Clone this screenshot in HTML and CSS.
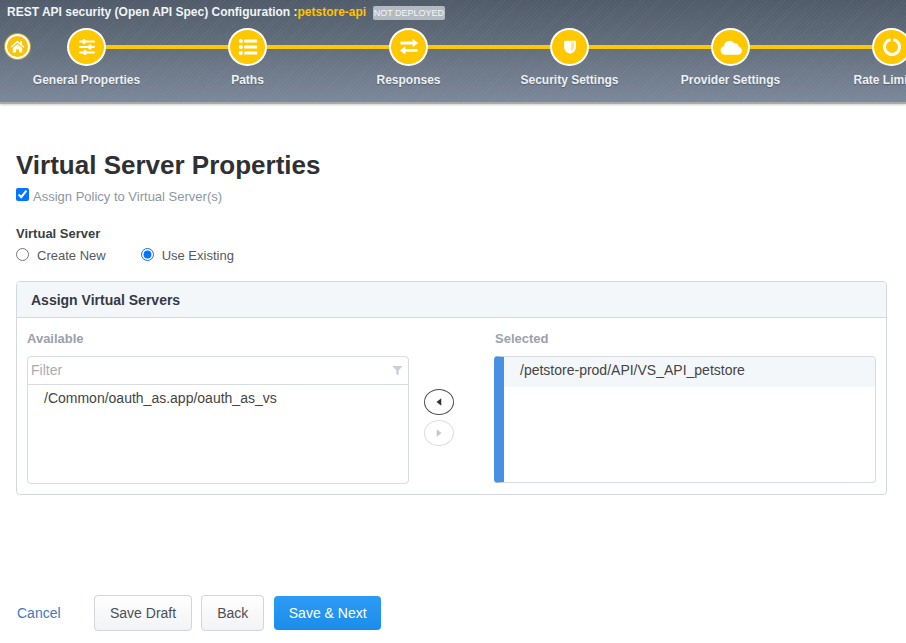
FILE: index.html
```html
<!DOCTYPE html>
<html lang="en">
<head>
<meta charset="utf-8">
<title>Virtual Server Properties</title>
<link rel="stylesheet" href="styles.css">
</head>
<body>
<header class="wizard">
  <div class="wizard-title">
    <span>REST API security (Open API Spec) Configuration :</span><span class="policy-name">petstore-api</span>
    <span class="status-badge">NOT DEPLOYED</span>
  </div>
  <a class="home" href="#" aria-label="Home">
    <svg viewBox="0 0 16 16" width="15" height="15"><path fill="#fff" d="M8 1.6 .6 8.2l1 1.1L8 3.7l6.4 5.6 1-1.1-2.6-2.3V2.4h-2v2L8 1.6Z"/><path fill="#fff" d="M3 9.6 8 5.2l5 4.4V14.4H9.6v-3.2H6.4v3.2H3V9.6Z"/></svg>
  </a>
  <ol class="steps">
    <li class="step">
      <span class="step-dot">
        <svg viewBox="0 0 20 20" width="20" height="20"><g fill="#fff"><rect x="2" y="3.6" width="16" height="1.8" rx=".9"/><rect x="2" y="9.1" width="16" height="1.8" rx=".9"/><rect x="2" y="14.6" width="16" height="1.8" rx=".9"/><rect x="5.5" y="2" width="3" height="5" rx="1"/><rect x="11.5" y="7.5" width="3" height="5" rx="1"/><rect x="6.5" y="13" width="3" height="5" rx="1"/></g></svg>
      </span>
      <span class="step-label">General Properties</span>
    </li>
    <li class="step">
      <span class="step-dot">
        <svg viewBox="0 0 20 20" width="20" height="20"><g fill="#fff"><circle cx="2.8" cy="4" r="2.1"/><circle cx="2.8" cy="10" r="2.1"/><circle cx="2.8" cy="16" r="2.1"/><rect x="6.2" y="2.4" width="13" height="3.2" rx=".6"/><rect x="6.2" y="8.4" width="13" height="3.2" rx=".6"/><rect x="6.2" y="14.4" width="13" height="3.2" rx=".6"/></g></svg>
      </span>
      <span class="step-label">Paths</span>
    </li>
    <li class="step">
      <span class="step-dot">
        <svg viewBox="0 0 20 20" width="20" height="20"><g fill="#fff"><path d="M1.5 5h12.2V2.2L19 6.4l-5.3 4.2V7.8H1.5V5Z" transform="translate(0 -.4)"/><path d="M18.5 12.4H6.3V9.6L1 13.8 6.3 18v-2.8h12.2v-2.8Z" transform="translate(0 -.4)"/></g></svg>
      </span>
      <span class="step-label">Responses</span>
    </li>
    <li class="step">
      <span class="step-dot">
        <svg viewBox="0 0 20 20" width="18" height="18"><path fill="#fff" d="M3.500 3h13v7.500c0 3.400-3 5.800-6.500 7-3.500-1.200-6.500-3.600-6.500-7V3Z"/><path fill="#ffe28a" d="M11.300 5h3.200v5.400c0 2-1.500 3.600-3.200 4.500V5Z"/></svg>
      </span>
      <span class="step-label">Security Settings</span>
    </li>
    <li class="step">
      <span class="step-dot">
        <svg viewBox="0 0 20 20" width="24" height="24"><path fill="#fff" d="M5 16.500a3.700 3.700 0 0 1-.8-7.300 4.700 4.700 0 0 1 8.700-2.200 3.300 3.300 0 0 1 3.700 3 3.300 3.300 0 0 1-.8 6.500H5Z"/></svg>
      </span>
      <span class="step-label">Provider Settings</span>
    </li>
    <li class="step">
      <span class="step-dot">
        <svg viewBox="0 0 20 20" width="20" height="20"><path fill="none" stroke="#fff" stroke-width="3" d="M8.500 2.600a7.500 7.500 0 1 0 3 0"/></svg>
      </span>
      <span class="step-label">Rate Limiting</span>
    </li>
  </ol>
</header>

<main class="content">
  <h1 class="page-title">Virtual Server Properties</h1>
  <label class="assign-policy">
    <input type="checkbox" class="check" checked>
    <span>Assign Policy to Virtual Server(s)</span>
  </label>

  <div class="server-choice">
    <div class="field-title">Virtual Server</div>
    <div class="radio-row">
      <label class="radio-option"><input type="radio" name="vs" class="radio"><span>Create New</span></label>
      <label class="radio-option"><input type="radio" name="vs" class="radio" checked><span>Use Existing</span></label>
    </div>
  </div>

  <section class="panel">
    <h2 class="panel-head">Assign Virtual Servers</h2>
    <div class="panel-body">
      <div class="picker">
        <div class="picker-title">Available</div>
        <div class="list-box">
          <div class="filter-row">
            <span class="filter-text">Filter</span>
            <svg viewBox="0 0 12 12" width="11" height="11"><path fill="#ccd0d6" d="M.5 1h11L7.300 6v5.500L4.700 9.800V6L.5 1Z"/></svg>
          </div>
          <div class="list-item">/Common/oauth_as.app/oauth_as_vs</div>
        </div>
      </div>

      <div class="move-buttons">
        <button class="move-btn" type="button" aria-label="Remove"><svg viewBox="0 0 8 8" width="10" height="10"><path fill="#333" d="M5.800 1v6L2 4l3.800-3Z"/></svg></button>
        <button class="move-btn is-disabled" type="button" aria-label="Add"><svg viewBox="0 0 8 8" width="10" height="10"><path fill="#c4c8ce" d="M2.200 1v6L6 4 2.200 1Z"/></svg></button>
      </div>

      <div class="picker">
        <div class="picker-title picker-title-selected">Selected</div>
        <div class="list-box is-selected">
          <div class="selected-item">/petstore-prod/API/VS_API_petstore</div>
        </div>
      </div>
    </div>
  </section>

  <footer class="actions">
    <a class="cancel" href="#">Cancel</a>
    <button class="btn" type="button">Save Draft</button>
    <button class="btn" type="button">Back</button>
    <button class="btn btn-primary" type="button">Save &amp; Next</button>
  </footer>
</main>
</body>
</html>
```

FILE: styles.css
```css
* {
  box-sizing: border-box;
}

html,
body {
  margin: 0;
  height: 100%;
  overflow: hidden;
  background: #fff;
}

body {
  font-family: "Liberation Sans", Arial, sans-serif;
  font-size: 14px;
  color: #333;
}

/* Wizard header */
.wizard {
  position: relative;
  height: 104px;
  overflow: hidden;
  color: #f1f4f7;
  background:
    repeating-linear-gradient(135deg, rgba(255,255,255,.035) 0 1px, transparent 1px 3px),
    linear-gradient(180deg, #505b69 0%, #65707f 50%, #7b8899 100%);
  border-bottom: 2px solid #a9abab;
  box-shadow: 0 1px 2px rgba(0,0,0,.2);
}

.wizard-title {
  display: flex;
  align-items: center;
  height: 23px;
  padding-left: 7px;
  font-size: 12px;
  font-weight: 700;
  white-space: nowrap;
}

.policy-name {
  color: #ffc400;
}

.status-badge {
  margin-left: 7px;
  margin-top: 2px;
  height: 14px;
  padding: 0 .5px;
  line-height: 15px;
  font-size: 9px;
  font-weight: 400;
  color: #f3f5f7;
  background: #b4bac2;
  border-radius: 2px;
}

.home {
  position: absolute;
  left: 5px;
  top: 34px;
  display: flex;
  align-items: center;
  justify-content: center;
  width: 25px;
  height: 25px;
  background: #fbc20a;
  border: 2px solid #fff;
  border-radius: 50%;
  box-shadow: 0 0 0 1px rgba(255,200,0,.6);
}

.steps {
  display: flex;
  margin: 5px 0 0;
  padding: 0 0 0 6px;
  list-style: none;
  width: 1000px;
}

.step {
  position: relative;
  display: flex;
  flex: 0 0 161px;
  flex-direction: column;
  align-items: center;
}

.step::after {
  content: "";
  position: absolute;
  top: 17px;
  left: 50%;
  width: 161px;
  height: 4px;
  background: #ffc800;
}

.step:last-child::after {
  display: none;
}

.step-dot {
  position: relative;
  z-index: 1;
  display: flex;
  align-items: center;
  justify-content: center;
  width: 39px;
  height: 38px;
  background: #ffc800;
  border: 2px solid #fff;
  border-radius: 50%;
}

.step-label {
  margin-top: 6px;
  font-size: 12px;
  font-weight: 700;
  line-height: 16px;
  color: #eef1f4;
  white-space: nowrap;
  text-shadow: 0 1px 1px rgba(40,50,60,.45);
}

/* Content */
.content {
  padding: 0 19px 0 16px;
}

.page-title {
  margin: 46px 0 0;
  font-size: 26px;
  font-weight: 700;
  line-height: 30px;
  color: #2f3033;
}

.assign-policy {
  display: flex;
  align-items: center;
  gap: 4px;
  margin-top: 8px;
  height: 16px;
  font-size: 13px;
  color: #8f96a3;
}

.check {
  width: 13px;
  height: 13px;
  margin: 0 0 3px;
  accent-color: #0075ff;
}

.server-choice {
  margin-top: 22px;
}

.field-title {
  font-size: 13px;
  font-weight: 700;
  line-height: 16px;
  color: #3a3f47;
}

.radio-row {
  display: flex;
  gap: 35px;
  margin-top: 5px;
  font-size: 13px;
}

.radio-option {
  display: flex;
  align-items: center;
  gap: 8px;
  height: 16px;
  color: #555a62;
}

.radio {
  width: 13px;
  height: 13px;
  margin: 0 0 2px;
  accent-color: #0075ff;
}

/* Panel */
.panel {
  margin-top: 18px;
  height: 214px;
  border: 1px solid #d3d7e0;
  border-radius: 4px;
}

.panel-head {
  margin: 0;
  height: 36px;
  padding-left: 14px;
  font-size: 14px;
  font-weight: 700;
  line-height: 36px;
  color: #343a47;
  background: #f4f7fa;
  border-bottom: 1px solid #d3d7e0;
  border-radius: 3px 3px 0 0;
}

.panel-body {
  display: flex;
  padding: 0 10px;
}

.picker {
  flex: 0 0 382px;
}

.picker-title {
  height: 38px;
  font-size: 13px;
  font-weight: 700;
  line-height: 41px;
  color: #9aa1ae;
}

.picker-title-selected {
  padding-left: 1px;
}

.list-box {
  height: 128px;
  border: 1px solid #d8dbe0;
  border-radius: 4px;
  overflow: hidden;
}

.filter-row {
  display: flex;
  align-items: center;
  justify-content: space-between;
  height: 28px;
  padding: 0 5px 1px 3px;
  border-bottom: 1px solid #d8dbe0;
  color: #a8acb4;
}

.list-item {
  padding: 5px 16px;
  line-height: 16px;
  color: #444;
}

.list-box.is-selected {
  height: 127px;
  border-left: 10px solid #4a90e2;
}

.selected-item {
  height: 30px;
  padding: 5px 16px;
  line-height: 16px;
  color: #444;
  background: #f4f7fa;
}

.move-buttons {
  display: flex;
  flex: 0 0 85px;
  flex-direction: column;
  align-items: flex-start;
  gap: 5px;
  padding: 71px 0 0 15px;
}

.move-btn {
  display: flex;
  align-items: center;
  justify-content: center;
  width: 30px;
  height: 26px;
  padding: 0;
  background: #fff;
  border: 1px solid #4d4f52;
  border-radius: 50%;
}

.move-btn.is-disabled {
  border-color: #dcdee2;
}

/* Footer */
.actions {
  display: flex;
  align-items: center;
  gap: 9px;
  margin-top: 100px;
}

.cancel {
  width: 68px;
  margin-left: 1px;
  font-size: 14px;
  line-height: 16px;
  color: #4279bd;
  text-decoration: none;
}

.btn {
  height: 36px;
  padding: 0 15px;
  font-family: inherit;
  font-size: 14px;
  color: #4c4f57;
  background: linear-gradient(180deg, #fff, #f2f3f6);
  border: 1px solid #d2d5dc;
  border-radius: 4px;
}

.btn-primary {
  height: 34px;
  margin-left: 1px;
  padding: 0 14.5px;
  color: #fff;
  background: linear-gradient(180deg, #2c9cf6, #1c8ceb);
  border: 0;
}
```
